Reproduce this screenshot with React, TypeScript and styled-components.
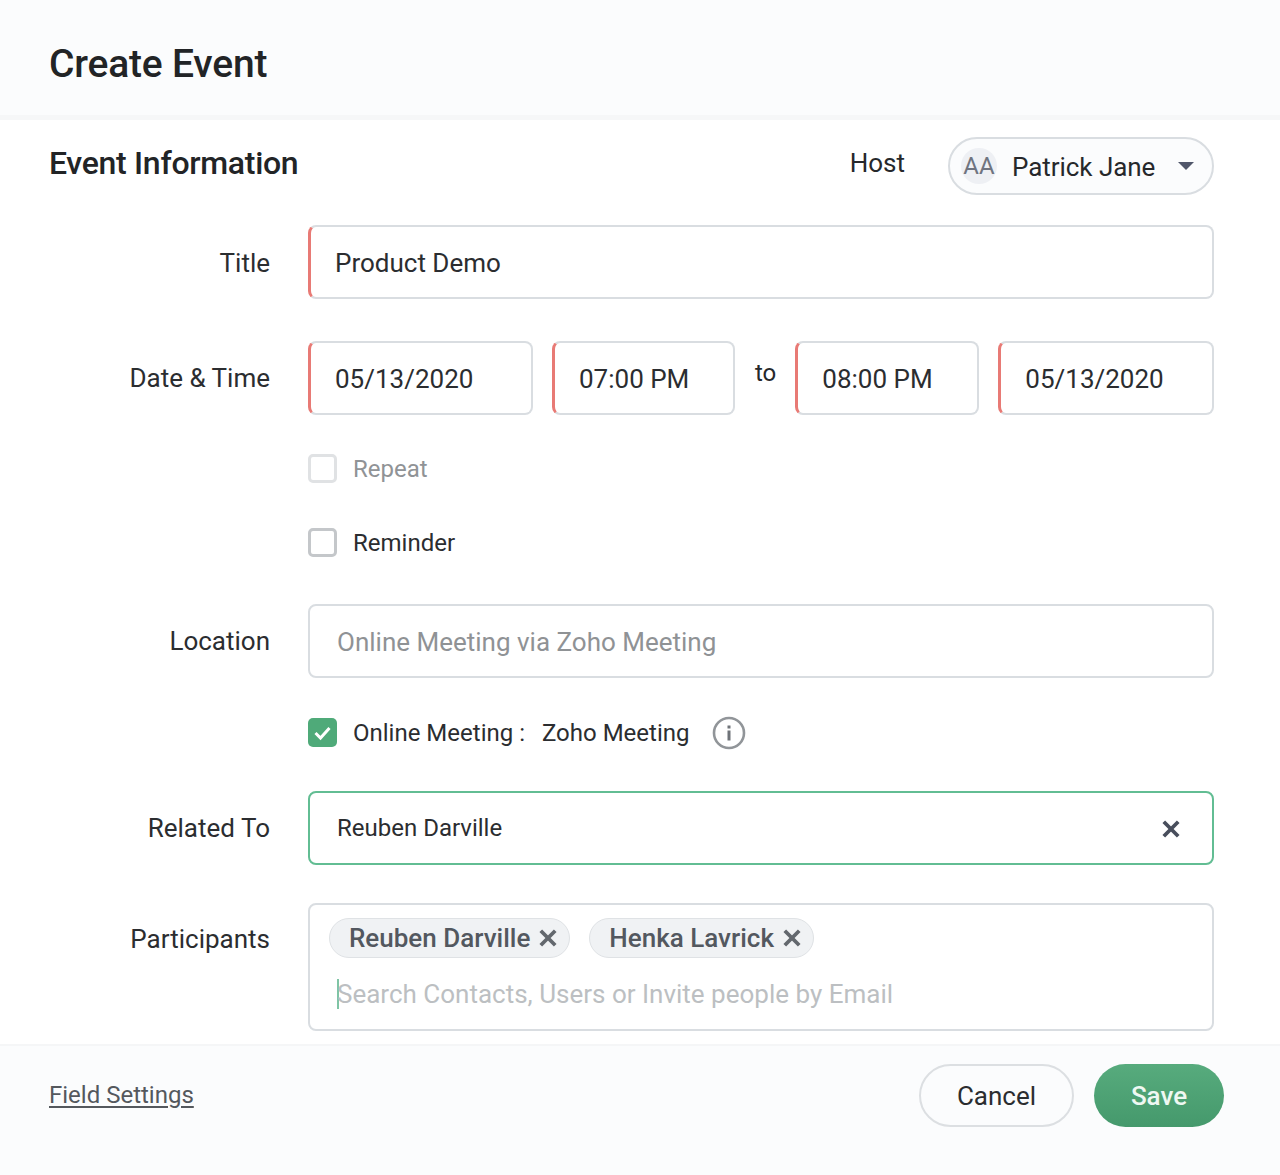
import React from 'react';
import styled, { createGlobalStyle } from 'styled-components';

const GlobalStyle = createGlobalStyle`
  html, body {
    margin: 0;
    padding: 0;
    background: #fff;
  }
  body {
    font-family: Roboto, "Liberation Sans", sans-serif;
    color: #26282b;
  }
`;

const Page = styled.div`
  width: 1280px;
  height: 1175px;
  display: flex;
  flex-direction: column;
  overflow: hidden;
`;

const Header = styled.header`
  height: 115px;
  box-sizing: content-box;
  flex-shrink: 0;
  padding-left: 49px;
  display: flex;
  align-items: center;
  background: #fbfcfd;
  border-bottom: 5px solid #f6f7f8;
`;

const PageTitle = styled.h1`
  margin: 13px 0 0;
  font-size: 39px;
  font-weight: 500;
  line-height: 46px;
  letter-spacing: -0.2px;
  color: #222426;
`;

const Body = styled.main`
  flex: 1;
  padding: 17px 66px 0 49px;
`;

const SectionHead = styled.div`
  display: flex;
  align-items: flex-start;
  height: 58px;
`;

const SectionTitle = styled.h2`
  margin: 7px 0 0;
  font-size: 32px;
  font-weight: 500;
  line-height: 38px;
  letter-spacing: -0.3px;
  color: #222426;
  flex: 1;
`;

const HostLabel = styled.span`
  font-size: 26px;
  line-height: 52px;
  margin-right: 43px;
`;

const HostSelect = styled.div`
  width: 266px;
  height: 58px;
  box-sizing: border-box;
  border: 2px solid #d9dde1;
  border-radius: 29px;
  background: #fbfcfd;
  display: flex;
  align-items: center;
  padding: 0 18px 0 11px;
`;

const Avatar = styled.span`
  width: 36px;
  height: 36px;
  border-radius: 50%;
  background: #eef0f4;
  color: #6f7480;
  font-size: 24px;
  display: flex;
  align-items: center;
  justify-content: center;
  margin-right: 15px;
`;

const HostName = styled.span`
  flex: 1;
  font-size: 26px;
  padding-top: 2px;
  letter-spacing: -0.05px;
`;

const Caret = styled.span`
  width: 0;
  height: 0;
  border-left: 8px solid transparent;
  border-right: 8px solid transparent;
  border-top: 8px solid #50566a;
`;

const Row = styled.div<{ $top: number }>`
  display: grid;
  grid-template-columns: 221px 1fr;
  column-gap: 38px;
  margin-top: ${(p) => p.$top}px;
`;

const Label = styled.label<{ $lineHeight?: number }>`
  text-align: right;
  font-size: 26px;
  line-height: ${(p) => p.$lineHeight ?? 74}px;
  color: #2b2d30;
`;

const Field = styled.div<{ $required?: boolean; $focused?: boolean; $muted?: boolean }>`
  height: 74px;
  box-sizing: border-box;
  display: flex;
  align-items: center;
  padding: 2px 29px 0 ${(p) => (p.$required ? 24 : 27)}px;
  border: 2px solid ${(p) => (p.$focused ? '#62bd93' : '#d9dde1')};
  border-left: ${(p) => (p.$required ? '3px solid #e87a75' : undefined)};
  border-radius: 8px;
  font-size: 26px;
  color: ${(p) => (p.$muted ? '#8f9295' : '#2b2d30')};
`;

const DateRow = styled.div`
  display: flex;
  align-items: center;
  gap: 19px;
`;

const DateField = styled(Field)<{ $width: number }>`
  width: ${(p) => p.$width}px;
  flex-shrink: 0;
`;

const To = styled.span`
  font-size: 24px;
  margin: -10px 0 0 1px;
`;

const CheckRow = styled.div<{ $top: number; $muted?: boolean }>`
  display: flex;
  align-items: center;
  margin: ${(p) => p.$top}px 0 0 259px;
  height: 29px;
  font-size: 24px;
  color: ${(p) => (p.$muted ? '#909396' : '#2b2d30')};
`;

const Check = styled.span<{ $state: 'off' | 'faint' | 'on' }>`
  width: 29px;
  height: 29px;
  box-sizing: border-box;
  border-radius: 5px;
  margin-right: 16px;
  display: flex;
  align-items: center;
  justify-content: center;
  border: ${(p) =>
    p.$state === 'on' ? 'none' : `3px solid ${p.$state === 'faint' ? '#e0e2e4' : '#c4c7ca'}`};
  background: ${(p) => (p.$state === 'on' ? '#4faa79' : '#fff')};
`;

const MeetingName = styled.span`
  margin-left: 17px;
  margin-right: 23px;
`;

const ClearButton = styled.span`
  display: flex;
  margin-left: auto;
  margin-right: 2px;
`;

const SmallValue = styled.span`
  font-size: 24px;
  margin-top: -2px;
`;

const ParticipantsBox = styled.div`
  height: 128px;
  box-sizing: border-box;
  border: 2px solid #d9dde1;
  border-radius: 8px;
  padding: 13px 19px 0;
`;

const Chips = styled.div`
  display: flex;
  gap: 19px;
`;

const Chip = styled.span`
  height: 40px;
  box-sizing: border-box;
  display: flex;
  align-items: center;
  gap: 8px;
  padding: 0 11px 0 19px;
  background: #f0f2f4;
  border: 1px solid #dfe2e5;
  border-radius: 20px;
  font-size: 26px;
  font-weight: 500;
  color: #53585f;
`;

const SearchLine = styled.div`
  margin: 21px 0 0 8px;
  height: 30px;
  border-left: 2px solid #7fc4a5;
  font-size: 26px;
  line-height: 30px;
  color: #bcbfc2;
  white-space: nowrap;
  text-indent: -2px;
`;

const Footer = styled.footer`
  height: 131px;
  flex-shrink: 0;
  box-sizing: border-box;
  border-top: 2px solid #f5f6f7;
  background: #fbfcfd;
  padding: 18px 56px 0 49px;
  display: flex;
  align-items: flex-start;
`;

const SettingsLink = styled.a`
  font-size: 24px;
  line-height: 63px;
  color: #54585d;
  text-decoration: underline;
  text-underline-offset: 3px;
  flex: 1;
`;

const Button = styled.button<{ $primary?: boolean }>`
  height: 63px;
  width: ${(p) => (p.$primary ? 130 : 155)}px;
  box-sizing: border-box;
  border-radius: 32px;
  font-family: inherit;
  font-size: 26px;
  font-weight: ${(p) => (p.$primary ? 500 : 400)};
  color: ${(p) => (p.$primary ? '#eef8f2' : '#2b2d30')};
  background: ${(p) => (p.$primary ? 'linear-gradient(#57ab7d, #45996c)' : '#fbfcfd')};
  border: ${(p) => (p.$primary ? 'none' : '2px solid #dcdfe2')};
  margin-left: ${(p) => (p.$primary ? 20 : 0)}px;
`;

function CrossIcon({ size, color }: { size: number; color: string }) {
  return (
    <svg width={size} height={size} viewBox="0 0 18 18" fill="none">
      <path d="M2.5 2.5 15.5 15.5M15.5 2.5 2.5 15.5" stroke={color} strokeWidth="3.4" />
    </svg>
  );
}

export default function App() {
  return (
    <Page>
      <GlobalStyle />
      <Header>
        <PageTitle>Create Event</PageTitle>
      </Header>
      <Body>
        <SectionHead>
          <SectionTitle>Event Information</SectionTitle>
          <HostLabel>Host</HostLabel>
          <HostSelect>
            <Avatar>AA</Avatar>
            <HostName>Patrick Jane</HostName>
            <Caret />
          </HostSelect>
        </SectionHead>

        <Row $top={30}>
          <Label $lineHeight={76}>Title</Label>
          <Field $required>Product Demo</Field>
        </Row>

        <Row $top={39}>
          <Label $lineHeight={76}>Date &amp; Time</Label>
          <DateRow>
            <DateField $required $width={225}>05/13/2020</DateField>
            <DateField $required $width={183}>07:00 PM</DateField>
            <To>to</To>
            <DateField $required $width={184}>08:00 PM</DateField>
            <DateField $required $width={216}>05/13/2020</DateField>
          </DateRow>
        </Row>

        <CheckRow $top={38} $muted>
          <Check $state="faint" />
          Repeat
        </CheckRow>
        <CheckRow $top={45}>
          <Check $state="off" />
          Reminder
        </CheckRow>

        <Row $top={47}>
          <Label>Location</Label>
          <Field $muted>Online Meeting via Zoho Meeting</Field>
        </Row>

        <CheckRow $top={40}>
          <Check $state="on">
            <svg width="21" height="21" viewBox="0 0 21 21" fill="none">
              <path d="M3.5 11 8.5 16 17.5 6" stroke="#fff" strokeWidth="3" />
            </svg>
          </Check>
          Online Meeting :
          <MeetingName>Zoho Meeting</MeetingName>
          <svg width="34" height="34" viewBox="0 0 34 34" fill="none">
            <circle cx="17" cy="17" r="15" stroke="#919599" strokeWidth="2.6" />
            <rect x="15.5" y="14.5" width="3" height="10" fill="#6f7378" />
            <rect x="15.5" y="9.5" width="3" height="3" fill="#6f7378" />
          </svg>
        </CheckRow>

        <Row $top={44}>
          <Label>Related To</Label>
          <Field $focused>
            <SmallValue>Reuben Darville</SmallValue>
            <ClearButton>
              <CrossIcon size={20} color="#484e5c" />
            </ClearButton>
          </Field>
        </Row>

        <Row $top={38}>
          <Label $lineHeight={72}>Participants</Label>
          <ParticipantsBox>
            <Chips>
              <Chip>
                Reuben Darville
                <CrossIcon size={20} color="#63686e" />
              </Chip>
              <Chip>
                Henka Lavrick
                <CrossIcon size={20} color="#63686e" />
              </Chip>
            </Chips>
            <SearchLine>Search Contacts, Users or Invite people by Email</SearchLine>
          </ParticipantsBox>
        </Row>
      </Body>
      <Footer>
        <SettingsLink>Field Settings</SettingsLink>
        <Button>Cancel</Button>
        <Button $primary>Save</Button>
      </Footer>
    </Page>
  );
}
